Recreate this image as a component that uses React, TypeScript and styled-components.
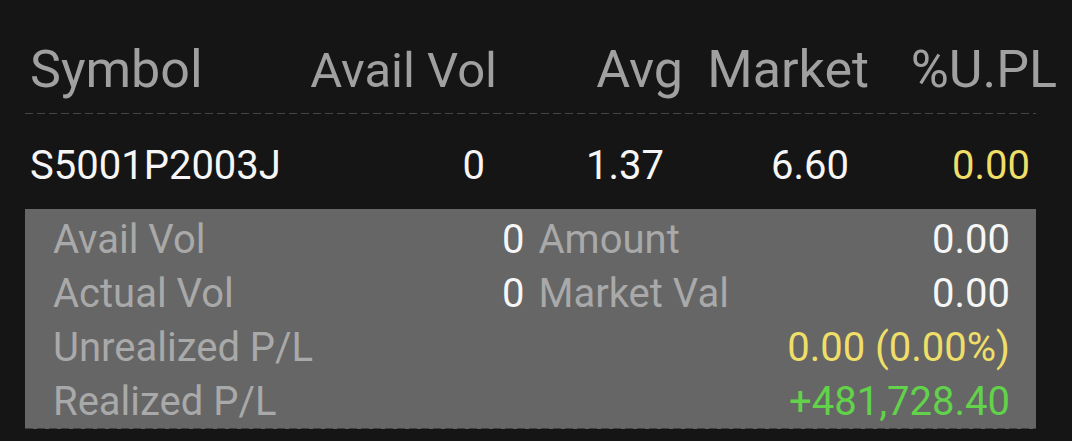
import React from 'react';
import styled, { createGlobalStyle } from 'styled-components';

const GlobalStyle = createGlobalStyle`
  body {
    margin: 0;
    background: #151515;
    font-family: Roboto, "Noto Sans", sans-serif;
  }
`;

type Tone = 'white' | 'yellow' | 'green';

const toneColor: Record<Tone, string> = {
  white: '#f6f6f6',
  yellow: '#efdf68',
  green: '#62d24a',
};

const Screen = styled.div`
  width: 1072px;
  height: 441px;
  overflow: hidden;
  box-sizing: border-box;
  padding: 40px 0 0 25px;
`;

const Table = styled.div`
  width: 1011px;
`;

const Row = styled.div<{ $cols: string }>`
  display: grid;
  grid-template-columns: ${({ $cols }) => $cols};
  align-items: baseline;
  padding-left: 5px;
  white-space: nowrap;
`;

const HeaderRow = styled(Row)`
  font-size: 52px;
  line-height: 60px;
  color: #a0a0a0;
  padding-bottom: 12px;
`;

const DataRow = styled(Row)`
  margin-top: 27px;
  font-size: 40px;
  line-height: 50px;
`;

const Cell = styled.span<{ $right?: boolean; $tone?: Tone; $size?: number }>`
  text-align: ${({ $right }) => ($right ? 'right' : 'left')};
  color: ${({ $tone }) => ($tone ? toneColor[$tone] : 'inherit')};
  ${({ $size }) => ($size ? `font-size: ${$size}px;` : '')}
`;

const Divider = styled.div`
  height: 1px;
  background: repeating-linear-gradient(to right, #454545 0 8px, transparent 8px 12px);
`;

const Detail = styled.div`
  margin-top: 18px;
  display: grid;
  grid-template-columns: 1fr 1fr;
  column-gap: 14px;
  padding: 4px 26px 0 28px;
  font-size: 40px;
  line-height: 54px;
  white-space: nowrap;
  background:
    repeating-linear-gradient(to right, #3e3e3e 0 8px, transparent 8px 12px) bottom / 100% 1px no-repeat,
    #666666;
`;

const Field = styled.div`
  display: flex;
  justify-content: space-between;
`;

const Label = styled.span`
  color: #a9a9a9;
`;

const Value = styled.span<{ $tone: Tone }>`
  color: ${({ $tone }) => toneColor[$tone]};
`;

const headCols = '230px 237px 186px 186px 188px';
const dataCols = '230px 225px 179px 185px 181px';

const details: { label: string; value: string; label2: string; value2: string; tone2: Tone }[] = [
  { label: 'Avail Vol', value: '0', label2: 'Amount', value2: '0.00', tone2: 'white' },
  { label: 'Actual Vol', value: '0', label2: 'Market Val', value2: '0.00', tone2: 'white' },
  { label: 'Unrealized P/L', value: '', label2: '', value2: '0.00 (0.00%)', tone2: 'yellow' },
  { label: 'Realized P/L', value: '', label2: '', value2: '+481,728.40', tone2: 'green' },
];

const App = () => {
  return (
    <Screen>
      <GlobalStyle />
      <Table>
        <HeaderRow $cols={headCols}>
          <Cell>Symbol</Cell>
          <Cell $right $size={49}>Avail Vol</Cell>
          <Cell $right>Avg</Cell>
          <Cell $right>Market</Cell>
          <Cell $right>%U.PL</Cell>
        </HeaderRow>
        <Divider />
        <DataRow $cols={dataCols}>
          <Cell $tone="white">S5001P2003J</Cell>
          <Cell $right $tone="white">0</Cell>
          <Cell $right $tone="white">1.37</Cell>
          <Cell $right $tone="white">6.60</Cell>
          <Cell $right $tone="yellow">0.00</Cell>
        </DataRow>
        <Detail>
          {details.map((d) => (
            <React.Fragment key={d.label}>
              <Field>
                <Label>{d.label}</Label>
                <Value $tone="white">{d.value}</Value>
              </Field>
              <Field>
                <Label>{d.label2}</Label>
                <Value $tone={d.tone2}>{d.value2}</Value>
              </Field>
            </React.Fragment>
          ))}
        </Detail>
      </Table>
    </Screen>
  );
};

export default App;
